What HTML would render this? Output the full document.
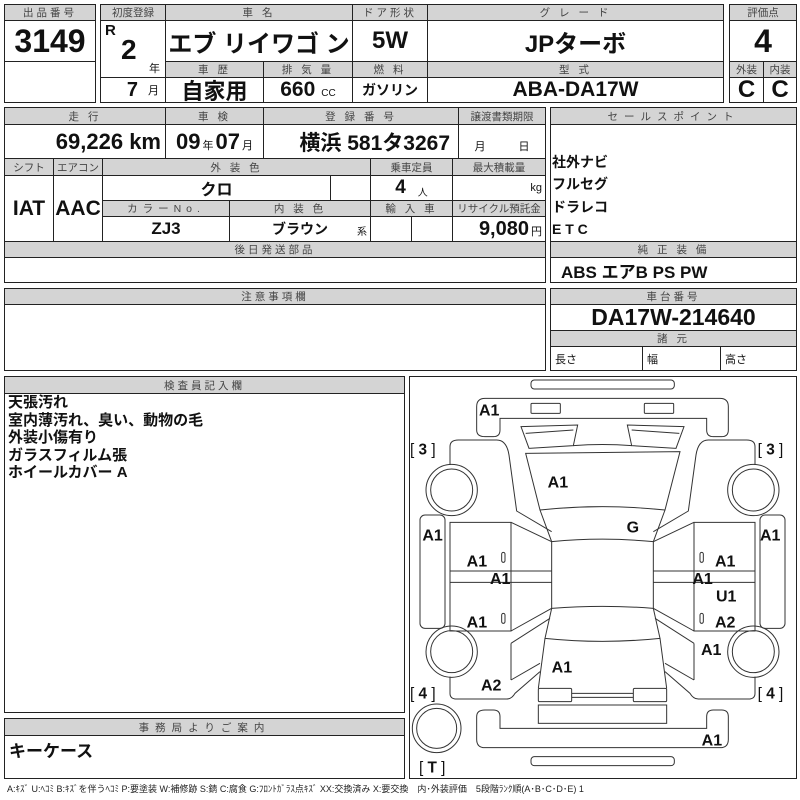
<!DOCTYPE html>
<html><head><meta charset="utf-8"><style>
*{margin:0;padding:0;box-sizing:border-box}
body{width:800px;height:800px;background:#fff;position:relative;overflow:hidden;font-family:"Liberation Sans","Noto Sans CJK JP",sans-serif;color:#111}
.c{position:absolute;border:1px solid #222;display:flex;align-items:center;justify-content:center;white-space:nowrap;font-weight:bold;font-family:"Liberation Sans Narrow","Liberation Sans","Noto Sans CJK JP",sans-serif}
.h{background:#d4d4d4;font-weight:normal;font-size:10.5px;letter-spacing:3px;color:#444;font-family:"Liberation Sans","Noto Sans CJK JP",sans-serif}
.b{font-size:22px;transform-origin:center}
.t{position:absolute;white-space:nowrap;font-weight:bold}
</style></head><body>
<!-- top -->
<div class="c h" style="left:4px;top:4px;width:92px;height:17px">出品番号</div>
<div class="c" style="left:4px;top:20px;width:92px;height:42px;font-size:32px">3149</div>
<div class="c" style="left:4px;top:61px;width:92px;height:42px"></div>
<div class="c h" style="left:100px;top:4px;width:66px;height:17px;letter-spacing:0">初度登録</div>
<div class="c" style="left:100px;top:20px;width:66px;height:58px"></div>
<div class="t" style="left:105px;top:22px;font-size:15px">R</div>
<div class="t" style="left:121px;top:34px;font-size:28px">2</div>
<div class="t" style="left:149px;top:60px;font-size:11px;font-weight:normal">年</div>
<div class="c" style="left:100px;top:77px;width:66px;height:26px;justify-content:flex-end;padding-right:6px;font-size:20px">7<span style="font-size:11px;font-weight:normal;margin-left:10px">月</span></div>
<div class="c h" style="left:165px;top:4px;width:188px;height:17px">車 名</div>
<div class="c b" style="left:165px;top:20px;width:188px;height:42px;font-size:24px">エブ リイワゴ ン</div>
<div class="c h" style="left:352px;top:4px;width:76px;height:17px">ドア形状</div>
<div class="c b" style="left:352px;top:20px;width:76px;height:42px;font-size:24px">5W</div>
<div class="c h" style="left:427px;top:4px;width:297px;height:17px">グ レ ー ド</div>
<div class="c b" style="left:427px;top:20px;width:297px;height:42px;font-size:24px">JPターボ</div>
<div class="c h" style="left:165px;top:61px;width:99px;height:17px">車 歴</div>
<div class="c b" style="left:165px;top:77px;width:99px;height:26px">自家用</div>
<div class="c h" style="left:263px;top:61px;width:90px;height:17px">排 気 量</div>
<div class="c" style="left:263px;top:77px;width:90px;height:26px;font-size:21px">660<span style="font-size:10px;font-weight:normal;margin-left:6px;margin-top:6px">CC</span></div>
<div class="c h" style="left:352px;top:61px;width:76px;height:17px">燃 料</div>
<div class="c" style="left:352px;top:77px;width:76px;height:26px;font-size:14px">ガソリン</div>
<div class="c h" style="left:427px;top:61px;width:297px;height:17px">型 式</div>
<div class="c" style="left:427px;top:77px;width:297px;height:26px;font-size:21px">ABA-DA17W</div>
<div class="c h" style="left:729px;top:4px;width:68px;height:17px;letter-spacing:0">評価点</div>
<div class="c" style="left:729px;top:20px;width:68px;height:42px;font-size:32px">4</div>
<div class="c h" style="left:729px;top:61px;width:35px;height:17px;letter-spacing:0">外装</div>
<div class="c h" style="left:763px;top:61px;width:34px;height:17px;letter-spacing:0">内装</div>
<div class="c" style="left:729px;top:77px;width:35px;height:26px;font-size:24px">C</div>
<div class="c" style="left:763px;top:77px;width:34px;height:26px;font-size:24px">C</div>
<!-- second -->
<div class="c h" style="left:4px;top:107px;width:162px;height:18px">走 行</div>
<div class="c" style="left:4px;top:124px;width:162px;height:35px;justify-content:flex-end;padding-right:4px;font-size:22px">69,226 km</div>
<div class="c h" style="left:165px;top:107px;width:99px;height:18px">車 検</div>
<div class="c" style="left:165px;top:124px;width:99px;height:35px;font-size:22px">09<span style="font-size:11px;font-weight:normal;margin:6px 2px 0">年</span>07<span style="font-size:11px;font-weight:normal;margin:6px 0 0 2px">月</span></div>
<div class="c h" style="left:263px;top:107px;width:196px;height:18px">登 録 番 号</div>
<div class="c" style="left:263px;top:124px;width:196px;height:35px;justify-content:flex-end;padding-right:8px;font-size:21px">横浜 581タ3267</div>
<div class="c h" style="left:458px;top:107px;width:88px;height:18px;letter-spacing:0">譲渡書類期限</div>
<div class="c" style="left:458px;top:124px;width:88px;height:35px;font-size:11px;font-weight:normal;align-items:flex-end;padding-bottom:4px;word-spacing:30px">月 日</div>
<div class="c h" style="left:4px;top:158px;width:50px;height:18px;letter-spacing:0">シフト</div>
<div class="c h" style="left:53px;top:158px;width:50px;height:18px;letter-spacing:0">エアコン</div>
<div class="c h" style="left:102px;top:158px;width:269px;height:18px">外 装 色</div>
<div class="c h" style="left:370px;top:158px;width:83px;height:18px;letter-spacing:0">乗車定員</div>
<div class="c h" style="left:452px;top:158px;width:94px;height:18px;letter-spacing:0">最大積載量</div>
<div class="c" style="left:4px;top:175px;width:50px;height:67px;font-size:21px">IAT</div>
<div class="c" style="left:53px;top:175px;width:50px;height:67px;font-size:21px">AAC</div>
<div class="c" style="left:102px;top:175px;width:229px;height:26px;font-size:16px">クロ</div>
<div class="c" style="left:330px;top:175px;width:41px;height:26px"></div>
<div class="c" style="left:370px;top:175px;width:83px;height:26px;font-size:19px">4<span style="font-size:10px;font-weight:normal;margin:6px 0 0 12px">人</span></div>
<div class="c" style="left:452px;top:175px;width:94px;height:26px;justify-content:flex-end;padding-right:3px;font-size:11px;font-weight:normal">kg</div>
<div class="c h" style="left:102px;top:200px;width:128px;height:17px;letter-spacing:5px">カラーNo.</div>
<div class="c h" style="left:229px;top:200px;width:142px;height:17px">内 装 色</div>
<div class="c h" style="left:370px;top:200px;width:83px;height:17px">輸 入 車</div>
<div class="c h" style="left:452px;top:200px;width:94px;height:17px;letter-spacing:0;font-size:10.5px">リサイクル預託金</div>
<div class="c" style="left:102px;top:216px;width:128px;height:26px;font-size:17px">ZJ3</div>
<div class="c" style="left:229px;top:216px;width:142px;height:26px;font-size:14px">ブラウン<span style="font-size:10px;font-weight:normal;position:absolute;right:3px;bottom:3px">系</span></div>
<div class="c" style="left:370px;top:216px;width:42px;height:26px"></div>
<div class="c" style="left:411px;top:216px;width:42px;height:26px"></div>
<div class="c" style="left:452px;top:216px;width:94px;height:26px;justify-content:flex-end;padding-right:3px;font-size:20px">9,080<span style="font-size:11px;font-weight:normal;margin:4px 0 0 2px">円</span></div>
<div class="c h" style="left:4px;top:241px;width:542px;height:17px">後日発送部品</div>
<div class="c" style="left:4px;top:257px;width:542px;height:26px"></div>
<div class="c h" style="left:550px;top:107px;width:247px;height:18px;letter-spacing:6px">セールスポイント</div>
<div class="c" style="left:550px;top:124px;width:247px;height:118px"></div>
<div class="t" style="left:552px;top:151px;font-size:14px;line-height:22.3px">社外ナビ<br>フルセグ<br>ドラレコ<br>E T C</div>
<div class="c h" style="left:550px;top:241px;width:247px;height:17px">純 正 装 備</div>
<div class="c" style="left:550px;top:257px;width:247px;height:26px;justify-content:flex-start;padding-left:10px;font-size:17px">ABS エアB PS PW</div>
<!-- third -->
<div class="c h" style="left:4px;top:288px;width:542px;height:17px">注意事項欄</div>
<div class="c" style="left:4px;top:304px;width:542px;height:67px"></div>
<div class="c h" style="left:550px;top:288px;width:247px;height:17px">車台番号</div>
<div class="c" style="left:550px;top:304px;width:247px;height:27px;font-size:23px">DA17W-214640</div>
<div class="c h" style="left:550px;top:330px;width:247px;height:17px">諸 元</div>
<div class="c" style="left:550px;top:346px;width:93px;height:25px;justify-content:flex-start;padding-left:4px;font-size:11px;font-weight:normal">長さ</div>
<div class="c" style="left:642px;top:346px;width:79px;height:25px;justify-content:flex-start;padding-left:4px;font-size:11px;font-weight:normal">幅</div>
<div class="c" style="left:720px;top:346px;width:77px;height:25px;justify-content:flex-start;padding-left:4px;font-size:11px;font-weight:normal">高さ</div>
<!-- fourth -->
<div class="c h" style="left:4px;top:376px;width:401px;height:18px">検査員記入欄</div>
<div class="c" style="left:4px;top:393px;width:401px;height:320px"></div>
<div class="t" style="left:8px;top:394px;font-size:15px;line-height:17.6px">天張汚れ<br>室内薄汚れ、臭い、動物の毛<br>外装小傷有り<br>ガラスフィルム張<br>ホイールカバー A</div>
<div class="c h" style="left:4px;top:718px;width:401px;height:18px;letter-spacing:6px">事務局よりご案内</div>
<div class="c" style="left:4px;top:735px;width:401px;height:44px"></div>
<div class="t" style="left:9px;top:737px;font-size:17px">キーケース</div>
<div class="c" style="left:409px;top:376px;width:388px;height:403px"></div>
<svg style="position:absolute;left:405px;top:375px" width="395" height="405" viewBox="0 0 1185 1215">
<g fill="none" stroke="#333" stroke-width="3">
<rect x="378" y="15" width="430" height="27" rx="10"/>
<rect x="378" y="1145" width="430" height="27" rx="10"/>
<path d="M240 70H945Q970 70 970 95V165Q970 185 950 185H925Q905 185 905 165V130H285V165Q285 185 265 185H240Q215 185 215 165V95Q215 70 240 70Z"/>
<path d="M240 1118H945Q970 1118 970 1093V1025Q970 1005 950 1005H925Q905 1005 905 1025V1060H285V1025Q285 1005 265 1005H240Q215 1005 215 1025V1093Q215 1118 240 1118Z"/>
<rect x="378" y="85" width="88" height="30" rx="3"/>
<rect x="718" y="85" width="88" height="30" rx="3"/>
<path d="M362 235L825 230L780 405Q592 385 405 405Z"/>
<path d="M405 405L440 500Q592 485 745 500L780 405"/>
<path d="M440 500V700Q592 688 745 700V500"/>
<path d="M440 700L420 790Q592 808 765 790L745 700"/>
<path d="M420 790L400 940M765 790L785 940"/>
<rect x="400" y="940" width="100" height="40" rx="4"/>
<rect x="685" y="940" width="100" height="40" rx="4"/>
<path d="M500 955H685M500 967H685"/>
<rect x="400" y="990" width="385" height="55"/>
<path d="M505 212Q592 205 680 212"/>
<circle cx="95" cy="1060" r="73"/><circle cx="95" cy="1060" r="60"/>
<g id="L">
<path d="M348 155L518 150L505 212L372 220ZM362 175L505 165"/>
<path d="M135 270V215Q135 195 160 195H275Q305 195 312 240L335 408L440 470"/>
<circle cx="140" cy="345" r="77"/><circle cx="140" cy="345" r="63"/>
<circle cx="140" cy="830" r="77"/><circle cx="140" cy="830" r="63"/>
<rect x="45" y="420" width="75" height="340" rx="15"/>
<path d="M135 442H318V768H135ZM318 442L440 500M318 768L440 700M135 588H440M135 622H440"/>
<path d="M318 805L435 730M318 915L405 865M318 805V915"/>
<path d="M135 905V955Q135 972 155 972H305Q320 972 330 955L405 890"/>
<rect x="290" y="532" width="10" height="30" rx="5"/>
<rect x="290" y="715" width="10" height="30" rx="5"/>
</g>
<use href="#L" transform="translate(1185,0) scale(-1,1)"/>
</g>
<g font-family="Liberation Sans,sans-serif" font-weight="bold" font-size="48" fill="#111">
<text x="222" y="122">A1</text><text x="428" y="337">A1</text><text x="52" y="497">A1</text>
<text x="665" y="472">G</text><text x="185" y="574">A1</text><text x="255" y="627">A1</text>
<text x="185" y="757">A1</text><text x="1065" y="497">A1</text><text x="930" y="574">A1</text>
<text x="862" y="627">A1</text><text x="933" y="679">U1</text><text x="930" y="757">A2</text>
<text x="888" y="840">A1</text><text x="440" y="892">A1</text><text x="228" y="947">A2</text>
<text x="890" y="1112">A1</text>
</g>
<g font-family="Liberation Sans,sans-serif" font-size="46" fill="#111">
<text x="15" y="238">[ <tspan font-weight="bold">3</tspan> ]</text>
<text x="1058" y="238">[ <tspan font-weight="bold">3</tspan> ]</text>
<text x="15" y="970">[ <tspan font-weight="bold">4</tspan> ]</text>
<text x="1058" y="970">[ <tspan font-weight="bold">4</tspan> ]</text>
<text x="42" y="1192">[ <tspan font-weight="bold">T</tspan> ]</text>
</g>
</svg>
<div class="t" style="left:7px;top:782px;font-size:9px;font-weight:normal;color:#222">A:ｷｽﾞ U:ﾍｺﾐ B:ｷｽﾞを伴うﾍｺﾐ P:要塗装 W:補修跡 S:錆 C:腐食 G:ﾌﾛﾝﾄｶﾞﾗｽ点ｷｽﾞ XX:交換済み X:要交換　内･外装評価　5段階ﾗﾝｸ順(A･B･C･D･E) 1</div>
</body></html>
